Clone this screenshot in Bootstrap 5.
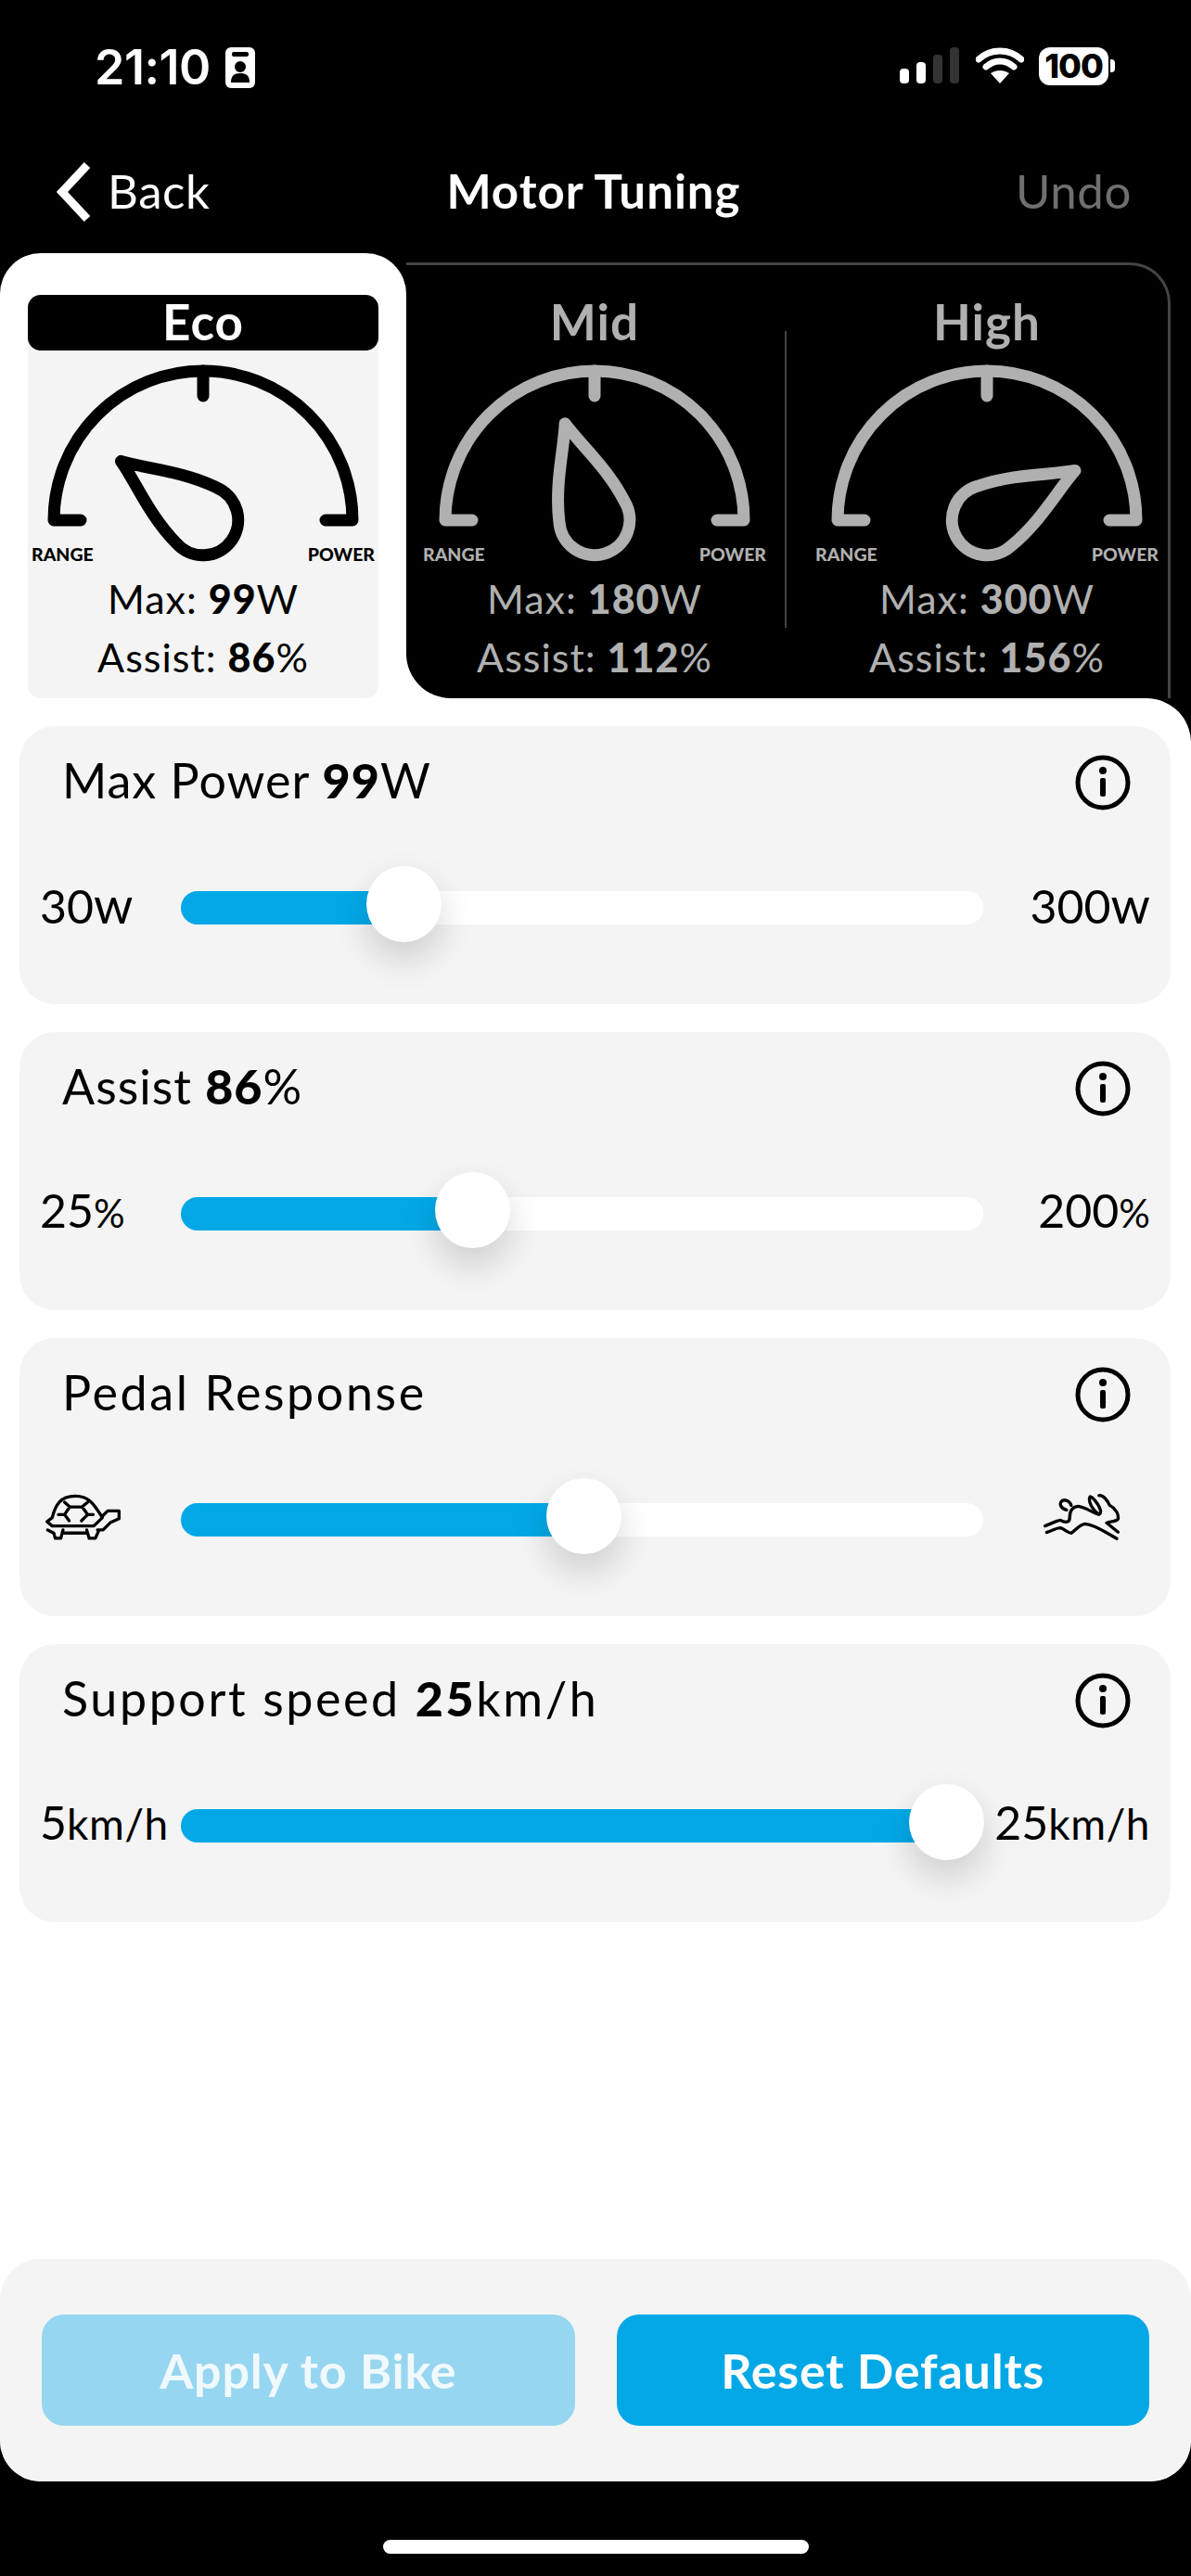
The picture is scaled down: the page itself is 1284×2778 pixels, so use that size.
<!DOCTYPE html>
<html lang="en">
  <head>
    <meta charset="UTF-8" />
    <meta name="viewport" content="width=device-width, initial-scale=1.0" />
    <title>Motor Tuning</title>
    <link
      href="https://cdn.jsdelivr.net/npm/bootstrap@5.3.0/dist/css/bootstrap.min.css"
      rel="stylesheet"
    />
    <style>
      html, body { height: 100%; }
      body { background: #000; font-family: Lato, "Open Sans", sans-serif; color: #000; width: 1284px; height: 2778px; overflow: hidden; }
      .phone { height: 2778px; }
      .status-row { height: 146px; padding: 50px 82px 0 102px; color: #fff; }
      .clock { font-family: Inter, sans-serif; font-weight: 600; font-size: 52px; line-height: 46px; letter-spacing: -.5px; }
      .batt { width: 75px; height: 41px; border-radius: 12px; background: #fff; color: #000; font-family: Inter, sans-serif; font-weight: 800; font-size: 36px; line-height: 41px; text-align: center; letter-spacing: -1px; }
      .batt-nub { width: 5px; height: 14px; background: #fff; border-radius: 0 4px 4px 0; margin-left: 2px; }
      .nav-row { height: 127px; padding: 0 64px 6px 60px; color: #fff; font-size: 51px; letter-spacing: .6px; }
      .nav-side { flex: 1 1 0; }
      .nav-title { font-weight: 700; font-size: 51px; letter-spacing: 1px; }
      .undo { color: #6f6f6f; }
      .modes { height: 480px; }
      .tab-eco { width: 438px; background: #fff; border-radius: 44px 44px 0 0; padding: 45px 30px 0; flex: none; }
      .eco-card { background: #f4f4f4; border-radius: 14px; height: 435px; text-align: center; }
      .mode-head { height: 60px; line-height: 58px; font-size: 53px; font-weight: 700; letter-spacing: 1px; }
      .eco-card .mode-head { background: #000; color: #fff; border-radius: 14px; }
      .tab-rest-wrap { background: linear-gradient(transparent 80%, #fff 80%); }
      .tab-rest { background: #000; height: 100%; border-bottom-left-radius: 48px; padding: 10px 22px 0 0; }
      .tab-inner { height: 100%; border-top: 3px solid #444; border-right: 3px solid #444; border-top-right-radius: 44px; padding: 32px 0 0 14px; color: #b0b0b0; }
      .mode-col { width: 378px; flex: none; text-align: center; }
      .mode-div { width: 2px; background: #444; height: 320px; margin: 39px 27px 0 16px; flex: none; }
      .gauge { display: block; width: 378px; height: 236px; }
      .gauge text { font-family: Lato, sans-serif; font-size: 19.5px; font-weight: 900; }
      .mode-line { font-size: 43px; line-height: 63px; height: 63px; letter-spacing: 1px; }
      .mode-line b, .card-title-txt b { font-weight: 900; }
      .sheet { flex: 1 1 auto; background: #fff; border-radius: 0 48px 44px 44px; padding: 30px 0 0; }
      .tune-card { background: #f4f4f4; border-radius: 38px; height: 300px; margin: 0 22px 30px 21px; padding-top: 26px; }
      .tune-top { height: 64px; padding: 0 43px 0 46px; }
      .card-title-txt { font-size: 52px; line-height: 64px; letter-spacing: 1px; }
      .title-wide { letter-spacing: 2.6px; }
      .info-ico { margin-top: 5px; }
      .tune-row { margin-top: 62px; height: 81px; }
      .end-l { width: 174px; padding-left: 22px; flex: none; font-size: 50px; }
      .end-r { width: 202px; padding-right: 22px; flex: none; font-size: 50px; text-align: right; }
      .unit-w { font-size: 54px; }
      .unit-pc { font-size: 42px; }
      .unit-km { font-size: 46px; letter-spacing: .5px; }
      .turtle-slot { padding-left: 27px; }
      .rabbit-slot { padding-right: 54px; }
      .track { height: 36px; background: #fff; border-radius: 18px; margin-top: 6px; }
      .track-fill { height: 36px; background: #02a8e6; border-radius: 18px 0 0 18px; }
      .track-full { border-radius: 18px; }
      .thumb { position: absolute; top: -27px; width: 81px; height: 82px; margin-left: -40px; background: #fff; border-radius: 50%; box-shadow: 0 18px 38px rgba(0, 0, 0, .16); }
      .sheet-foot { background: #f4f4f4; border-radius: 44px; height: 240px; padding: 60px 45px; margin-top: 304px; gap: 45px; }
      .foot-btn, .foot-btn:disabled { flex: 1 1 0; height: 120px; border: 0; border-radius: 24px; font-size: 52px; font-weight: 700; letter-spacing: .8px; color: #fff; }
      .foot-on, .foot-on:hover { background: #02a8e6; color: #fff; }
      .foot-off:disabled { background: #97d6f0; opacity: 1; color: #f0f9fd; }
      .home-strip { height: 102px; padding-top: 63px; }
      .home-bar { width: 459px; height: 15px; background: #fff; border-radius: 8px; }
    </style>
  </head>
  <body>
    <div class="phone d-flex flex-column">
      <!-- status bar -->
      <div class="status-row d-flex justify-content-between align-items-start flex-none">
        <div class="d-flex align-items-center gap-3">
          <span class="clock">21:10</span>
          <svg width="32" height="44" viewBox="0 0 32 44">
            <rect width="32" height="44" rx="6" fill="#fff" />
            <rect x="7" y="5" width="18" height="5" rx="2" fill="#000" />
            <circle cx="16" cy="21" r="6" fill="#000" />
            <path d="M6 38c0-8 4-10 10-10s10 2 10 10z" fill="#000" />
          </svg>
        </div>
        <div class="d-flex align-items-center">
          <svg width="66" height="42" viewBox="0 0 66 42" class="me-3">
            <rect x="0" y="24" width="10" height="16" rx="4" fill="#fff" />
            <rect x="18" y="17" width="10" height="23" rx="4" fill="#fff" />
            <rect x="36" y="9" width="10" height="31" rx="4" fill="#333" />
            <rect x="54" y="1" width="10" height="39" rx="4" fill="#333" />
          </svg>
          <svg width="52" height="40" viewBox="0 0 52 40" class="me-3">
            <path d="M3 13c13-12 33-12 46 0" fill="none" stroke="#fff" stroke-width="7" stroke-linecap="round" />
            <path d="M11 21c9-8 21-8 30 0" fill="none" stroke="#fff" stroke-width="7" stroke-linecap="round" />
            <path d="M26 39l-10-11c6-4 14-4 20 0z" fill="#fff" />
          </svg>
          <div class="batt">100</div>
          <div class="batt-nub"></div>
        </div>
      </div>

      <!-- nav -->
      <div class="nav-row d-flex align-items-center">
        <div class="nav-side d-flex align-items-center">
          <svg width="40" height="66" viewBox="0 0 40 66">
            <path d="M34 4L7 33l27 29" fill="none" stroke="#fff" stroke-width="9" />
          </svg>
          <span class="ms-3">Back</span>
        </div>
        <div class="nav-title">Motor Tuning</div>
        <div class="nav-side text-end undo">Undo</div>
      </div>

      <!-- mode tabs -->
      <div class="modes d-flex">
        <div class="tab-eco">
          <div class="eco-card">
            <div class="mode-head">Eco</div>
            <svg class="gauge" viewBox="-189 -183 378 236">
              <g fill="none" stroke="#000" stroke-width="13" stroke-linecap="round" stroke-linejoin="round">
                <path d="M-132 0H-161A161 161 0 0 1 161 0H132" />
                <path d="M0 -161V-134" />
                <path transform="rotate(-54.3)" d="M0 -109C8 -85 30 -50 37 -9A38 38 0 1 1 -37 -9C-30 -50 -8 -85 0 -109Z" />
              </g>
              <text x="-185" y="44">RANGE</text>
              <text x="185" y="44" text-anchor="end">POWER</text>
            </svg>
            <div class="mode-line">Max: <b>99</b>W</div>
            <div class="mode-line">Assist: <b>86</b>%</div>
          </div>
        </div>
        <div class="tab-rest-wrap flex-grow-1">
          <div class="tab-rest">
            <div class="tab-inner d-flex">
              <div class="mode-col">
                <div class="mode-head">Mid</div>
                <svg class="gauge" viewBox="-189 -183 378 236">
                  <g fill="none" stroke="#b0b0b0" stroke-width="13" stroke-linecap="round" stroke-linejoin="round">
                    <path d="M-132 0H-161A161 161 0 0 1 161 0H132" />
                    <path d="M0 -161V-134" />
                    <path transform="rotate(-17)" d="M0 -109C8 -85 30 -50 37 -9A38 38 0 1 1 -37 -9C-30 -50 -8 -85 0 -109Z" />
                  </g>
                  <text x="-185" y="44" fill="#b0b0b0">RANGE</text>
                  <text x="185" y="44" text-anchor="end" fill="#b0b0b0">POWER</text>
                </svg>
                <div class="mode-line">Max: <b>180</b>W</div>
                <div class="mode-line">Assist: <b>112</b>%</div>
              </div>
              <div class="mode-div"></div>
              <div class="mode-col">
                <div class="mode-head">High</div>
                <svg class="gauge" viewBox="-189 -183 378 236">
                  <g fill="none" stroke="#b0b0b0" stroke-width="13" stroke-linecap="round" stroke-linejoin="round">
                    <path d="M-132 0H-161A161 161 0 0 1 161 0H132" />
                    <path d="M0 -161V-134" />
                    <path transform="rotate(60.6)" d="M0 -109C8 -85 30 -50 37 -9A38 38 0 1 1 -37 -9C-30 -50 -8 -85 0 -109Z" />
                  </g>
                  <text x="-185" y="44" fill="#b0b0b0">RANGE</text>
                  <text x="185" y="44" text-anchor="end" fill="#b0b0b0">POWER</text>
                </svg>
                <div class="mode-line">Max: <b>300</b>W</div>
                <div class="mode-line">Assist: <b>156</b>%</div>
              </div>
            </div>
          </div>
        </div>
      </div>

      <!-- sliders -->
      <div class="sheet d-flex flex-column">
        <div class="tune-card">
          <div class="tune-top d-flex justify-content-between align-items-center">
            <div class="card-title-txt">Max Power <b>99</b>W</div>
            <svg class="info-ico" width="60" height="60" viewBox="0 0 60 60">
              <circle cx="30" cy="30" r="27" fill="none" stroke="#000" stroke-width="5" />
              <circle cx="30" cy="17" r="4" fill="#000" />
              <rect x="27" y="25" width="6" height="20" rx="2" fill="#000" />
            </svg>
          </div>
          <div class="tune-row d-flex align-items-center">
            <div class="end-l">30<span class="unit-w">w</span></div>
            <div class="track flex-grow-1 position-relative">
              <div class="track-fill" style="width: 27.7%"></div>
              <div class="thumb" style="left: 27.7%"></div>
            </div>
            <div class="end-r">300<span class="unit-w">w</span></div>
          </div>
        </div>

        <div class="tune-card">
          <div class="tune-top d-flex justify-content-between align-items-center">
            <div class="card-title-txt">Assist <b>86</b>%</div>
            <svg class="info-ico" width="60" height="60" viewBox="0 0 60 60">
              <circle cx="30" cy="30" r="27" fill="none" stroke="#000" stroke-width="5" />
              <circle cx="30" cy="17" r="4" fill="#000" />
              <rect x="27" y="25" width="6" height="20" rx="2" fill="#000" />
            </svg>
          </div>
          <div class="tune-row d-flex align-items-center">
            <div class="end-l">25<span class="unit-pc">%</span></div>
            <div class="track flex-grow-1 position-relative">
              <div class="track-fill" style="width: 36.3%"></div>
              <div class="thumb" style="left: 36.3%"></div>
            </div>
            <div class="end-r">200<span class="unit-pc">%</span></div>
          </div>
        </div>

        <div class="tune-card">
          <div class="tune-top d-flex justify-content-between align-items-center">
            <div class="card-title-txt title-wide">Pedal Response</div>
            <svg class="info-ico" width="60" height="60" viewBox="0 0 60 60">
              <circle cx="30" cy="30" r="27" fill="none" stroke="#000" stroke-width="5" />
              <circle cx="30" cy="17" r="4" fill="#000" />
              <rect x="27" y="25" width="6" height="20" rx="2" fill="#000" />
            </svg>
          </div>
          <div class="tune-row d-flex align-items-center">
            <div class="end-l turtle-slot">
              <svg width="83" height="52" viewBox="140 125 250 156" class="d-block" fill="none" stroke="#000" stroke-width="10" stroke-linejoin="round" stroke-linecap="round">
                <path d="M148 218L165 205C175 165 190 135 240 135C290 135 305 170 328 205L300 232H165Z" />
                <path d="M205 155L222 170H262L280 155M222 170L205 195H185M205 195L220 215M262 170L280 195H298M280 195L260 215" />
                <path d="M328 200L345 183H382V208L355 220L330 245H312" />
                <path d="M150 245L170 255L175 272H193L200 245M200 255H280M277 245L285 272H305L315 250" />
              </svg>
            </div>
            <div class="track flex-grow-1 position-relative">
              <div class="track-fill" style="width: 50.2%"></div>
              <div class="thumb" style="left: 50.2%"></div>
            </div>
            <div class="end-r rabbit-slot d-flex justify-content-end">
              <svg width="83" height="52" viewBox="120 125 250 156" class="d-block" fill="none" stroke="#000" stroke-width="10" stroke-linejoin="round" stroke-linecap="round">
                <path d="M210 165C205 150 190 145 180 150C170 160 175 175 195 180" />
                <path d="M125 232C145 225 160 215 175 213C190 222 205 222 205 205C205 185 212 170 232 168C255 170 280 190 300 195C310 190 305 175 295 160C285 145 270 130 270 140C265 155 280 180 300 195" />
                <path d="M300 133C315 130 330 155 335 165C355 175 365 195 362 210C355 220 335 215 325 222L362 252" />
                <path d="M130 253C150 247 160 238 175 238C190 243 200 255 210 255C225 245 235 228 255 225C290 228 325 255 358 273" />
              </svg>
            </div>
          </div>
        </div>

        <div class="tune-card">
          <div class="tune-top d-flex justify-content-between align-items-center">
            <div class="card-title-txt title-wide">Support speed <b>25</b>km/h</div>
            <svg class="info-ico" width="60" height="60" viewBox="0 0 60 60">
              <circle cx="30" cy="30" r="27" fill="none" stroke="#000" stroke-width="5" />
              <circle cx="30" cy="17" r="4" fill="#000" />
              <rect x="27" y="25" width="6" height="20" rx="2" fill="#000" />
            </svg>
          </div>
          <div class="tune-row d-flex align-items-center">
            <div class="end-l">5<span class="unit-km">km/h</span></div>
            <div class="track flex-grow-1 position-relative">
              <div class="track-fill track-full" style="width: 100%"></div>
              <div class="thumb" style="left: 95.4%"></div>
            </div>
            <div class="end-r">25<span class="unit-km">km/h</span></div>
          </div>
        </div>

        <div class="sheet-foot d-flex mt-auto">
          <button type="button" class="btn foot-btn foot-off" disabled>Apply to Bike</button>
          <button type="button" class="btn foot-btn foot-on">Reset Defaults</button>
        </div>
      </div>

      <div class="home-strip d-flex justify-content-center">
        <div class="home-bar"></div>
      </div>
    </div>
    <script src="https://cdn.jsdelivr.net/npm/bootstrap@5.3.0/dist/js/bootstrap.bundle.min.js"></script>
  </body>
</html>
